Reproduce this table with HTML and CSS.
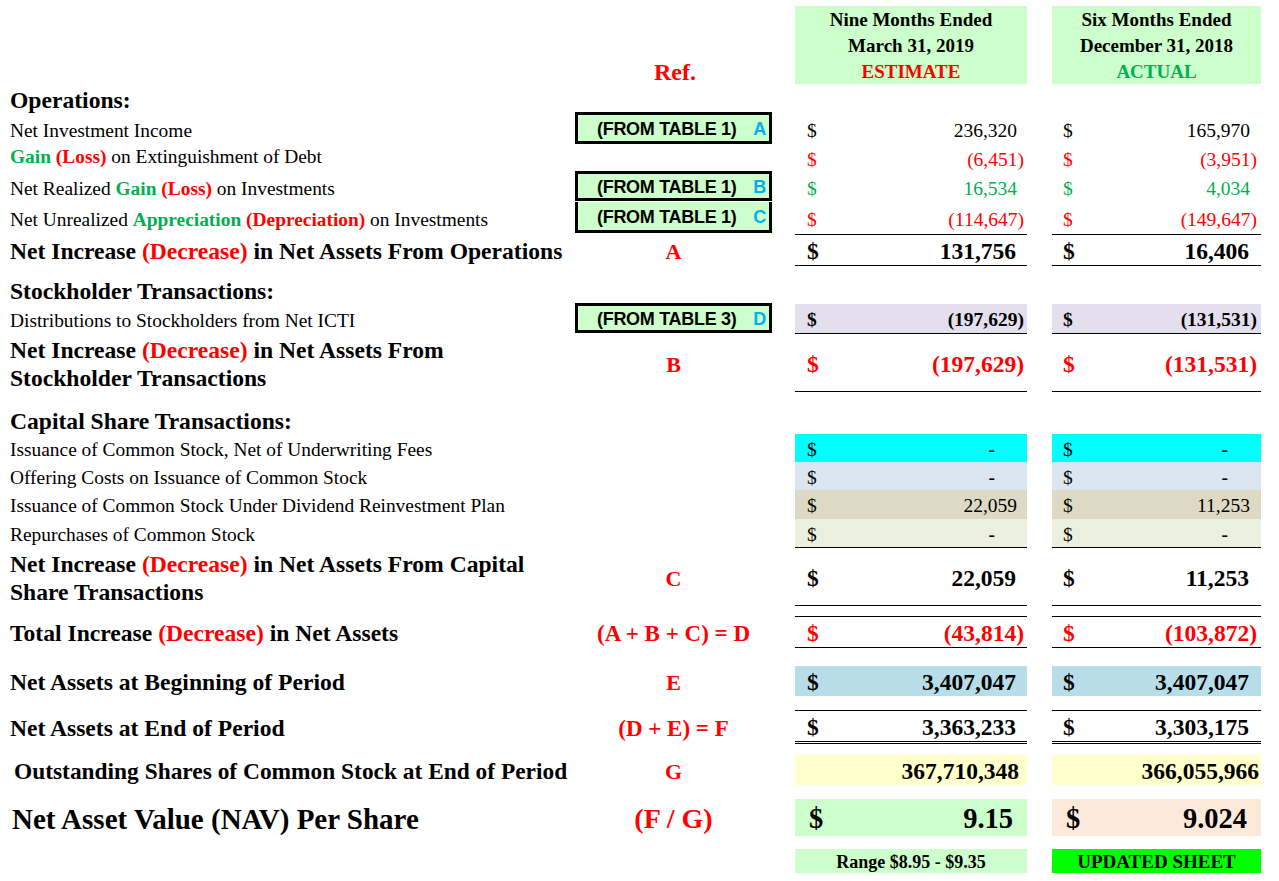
FILE: index.html
```html
<!DOCTYPE html>
<html>
<head>
<meta charset="utf-8">
<title>NAV Estimate</title>
<link rel="stylesheet" href="styles.css">
</head>
<body>
<div class="sheet">

  <div class="row r-head">
    <div class="ref ref-head">Ref.</div>
    <div class="hbox c1"><div>Nine Months Ended</div><div>March 31, 2019</div><div class="red">ESTIMATE</div></div>
    <div class="hbox c2"><div>Six Months Ended</div><div>December 31, 2018</div><div class="grn">ACTUAL</div></div>
  </div>

  <div class="row r-ops">
    <div class="lbl h"><span>Operations:</span></div>
  </div>

  <div class="row r-32">
    <div class="lbl"><span>Net Investment Income</span></div>
    <div class="ref ref-box"><div class="tbox"><span>(FROM TABLE 1)</span><span class="tl">A</span></div></div>
    <div class="v c1"><span>$</span><span class="num p">236,320</span></div>
    <div class="v c2"><span>$</span><span class="num p">165,970</span></div>
  </div>

  <div class="row r-27">
    <div class="lbl lbl-up"><span><b class="grn">Gain</b> <b class="red">(Loss)</b> on Extinguishment of Debt</span></div>
    <div class="v c1 red"><span>$</span><span class="num">(6,451)</span></div>
    <div class="v c2 red"><span>$</span><span class="num">(3,951)</span></div>
  </div>

  <div class="row r-30">
    <div class="lbl"><span>Net Realized <b class="grn">Gain</b> <b class="red">(Loss)</b> on Investments</span></div>
    <div class="ref ref-box"><div class="tbox"><span>(FROM TABLE 1)</span><span class="tl">B</span></div></div>
    <div class="v c1 grn"><span>$</span><span class="num p">16,534</span></div>
    <div class="v c2 grn"><span>$</span><span class="num p">4,034</span></div>
  </div>

  <div class="row r-32">
    <div class="lbl"><span>Net Unrealized <b class="grn">Appreciation</b> <b class="red">(Depreciation)</b> on Investments</span></div>
    <div class="ref ref-box"><div class="tbox tbox-join"><span>(FROM TABLE 1)</span><span class="tl">C</span></div></div>
    <div class="v c1 red"><span>$</span><span class="num">(114,647)</span></div>
    <div class="v c2 red"><span>$</span><span class="num">(149,647)</span></div>
  </div>

  <div class="row r-29">
    <div class="lbl h"><span>Net Increase <span class="red">(Decrease)</span> in Net Assets From Operations</span></div>
    <div class="ref">A</div>
    <div class="v c1 big bt bb"><span>$</span><span class="num pb">131,756</span></div>
    <div class="v c2 big bt bb"><span>$</span><span class="num pb">16,406</span></div>
  </div>

  <div class="spacer s-12"></div>

  <div class="row r-29">
    <div class="lbl h"><span>Stockholder Transactions:</span></div>
  </div>

  <div class="row r-30">
    <div class="lbl"><span>Distributions to Stockholders from Net ICTI</span></div>
    <div class="ref ref-box"><div class="tbox"><span>(FROM TABLE 3)</span><span class="tl">D</span></div></div>
    <div class="v c1 bold bg-purple bb"><span>$</span><span class="num">(197,629)</span></div>
    <div class="v c2 bold bg-purple bb"><span>$</span><span class="num">(131,531)</span></div>
  </div>

  <div class="row r-57">
    <div class="lbl h two"><span>Net Increase <span class="red">(Decrease)</span> in Net Assets From<br>Stockholder Transactions</span></div>
    <div class="ref">B</div>
    <div class="v c1 big red bb"><span>$</span><span class="num">(197,629)</span></div>
    <div class="v c2 big red bb"><span>$</span><span class="num">(131,531)</span></div>
  </div>

  <div class="row r-43">
    <div class="lbl h end"><span>Capital Share Transactions:</span></div>
  </div>

  <div class="row r-28">
    <div class="lbl"><span>Issuance of Common Stock, Net of Underwriting Fees</span></div>
    <div class="v c1 bg-cyan"><span>$</span><span class="num dash">-</span></div>
    <div class="v c2 bg-cyan"><span>$</span><span class="num dash">-</span></div>
  </div>

  <div class="row r-28">
    <div class="lbl"><span>Offering Costs on Issuance of Common Stock</span></div>
    <div class="v c1 bg-lblue"><span>$</span><span class="num dash">-</span></div>
    <div class="v c2 bg-lblue"><span>$</span><span class="num dash">-</span></div>
  </div>

  <div class="row r-29">
    <div class="lbl"><span>Issuance of Common Stock Under Dividend Reinvestment Plan</span></div>
    <div class="v c1 bg-tan"><span>$</span><span class="num p">22,059</span></div>
    <div class="v c2 bg-tan"><span>$</span><span class="num p">11,253</span></div>
  </div>

  <div class="row r-29">
    <div class="lbl"><span>Repurchases of Common Stock</span></div>
    <div class="v c1 bg-sage bb"><span>$</span><span class="num dash">-</span></div>
    <div class="v c2 bg-sage bb"><span>$</span><span class="num dash">-</span></div>
  </div>

  <div class="row r-54">
    <div class="lbl h two"><span>Net Increase <span class="red">(Decrease)</span> in Net Assets From Capital<br>Share Transactions</span></div>
    <div class="ref">C</div>
    <div class="v c1 big bb"><span>$</span><span class="num pb">22,059</span></div>
    <div class="v c2 big bb"><span>$</span><span class="num pb">11,253</span></div>
  </div>

  <div class="spacer s-14"></div>

  <div class="row r-30">
    <div class="lbl h"><span>Total Increase <span class="red">(Decrease)</span> in Net Assets</span></div>
    <div class="ref ref-formula">(A + B + C) = D</div>
    <div class="v c1 big red bt bb"><span>$</span><span class="num">(43,814)</span></div>
    <div class="v c2 big red bt bb"><span>$</span><span class="num">(103,872)</span></div>
  </div>

  <div class="spacer s-20"></div>

  <div class="row r-29">
    <div class="lbl h"><span>Net Assets at Beginning of Period</span></div>
    <div class="ref">E</div>
    <div class="v c1 big bg-blue"><span>$</span><span class="num pb">3,407,047</span></div>
    <div class="v c2 big bg-blue"><span>$</span><span class="num pb">3,407,047</span></div>
  </div>

  <div class="spacer s-15"></div>

  <div class="row r-33">
    <div class="lbl h"><span>Net Assets at End of Period</span></div>
    <div class="ref ref-formula">(D + E) = F</div>
    <div class="v c1 big bt bdbl"><span>$</span><span class="num pb">3,363,233</span></div>
    <div class="v c2 big bt bdbl"><span>$</span><span class="num pb">3,303,175</span></div>
  </div>

  <div class="spacer s-12"></div>

  <div class="row r-28">
    <div class="lbl h indent"><span>Outstanding Shares of Common Stock at End of Period</span></div>
    <div class="ref">G</div>
    <div class="v c1 big bg-yellow shares"><span class="num">367,710,348</span></div>
    <div class="v c2 big bg-yellow shares"><span class="num">366,055,966</span></div>
  </div>

  <div class="spacer s-16"></div>

  <div class="row r-37">
    <div class="lbl nav"><span>Net Asset Value (NAV) Per Share</span></div>
    <div class="ref ref-nav">(F / G)</div>
    <div class="v c1 huge bg-green navv"><span>$</span><span class="num">9.15</span></div>
    <div class="v c2 huge bg-peach navv"><span>$</span><span class="num">9.024</span></div>
  </div>

  <div class="spacer s-13"></div>

  <div class="row r-24">
    <div class="note c1 bg-green">Range $8.95 - $9.35</div>
    <div class="note c2 bg-lime">UPDATED SHEET</div>
  </div>

</div>
</body>
</html>
```

FILE: styles.css
```css
* { box-sizing: border-box; }

body {
  margin: 0;
  background: #ffffff;
  font-family: "Liberation Serif", "Times New Roman", serif;
  color: #000000;
}

.sheet {
  width: 1279px;
  padding-left: 10px;
}

.row {
  display: grid;
  grid-template-columns: 565px 197px 23px 232px 25px 209px;
}

.spacer { height: 12px; }
.s-12 { height: 12px; }
.s-13 { height: 13px; }
.s-14 { height: 14px; }
.s-15 { height: 15px; }
.s-16 { height: 16px; }
.s-20 { height: 20px; }

.r-head { height: 84px; }
.r-ops { height: 29px; }
.r-24 { height: 24px; }
.r-27 { height: 27px; }
.r-28 { height: 28px; }
.r-29 { height: 29px; }
.r-30 { height: 30px; }
.r-32 { height: 32px; }
.r-33 { height: 33px; }
.r-37 { height: 37px; }
.r-43 { height: 43px; }
.r-54 { height: 54px; }
.r-57 { height: 57px; }

.red { color: #ff0000; }
.grn { color: #00b050; }

/* label column */
.lbl {
  grid-column: 1;
  display: flex;
  align-items: center;
  padding-top: 3px;
  font-size: 19.4px;
  white-space: nowrap;
}
.lbl b { font-weight: bold; }
.lbl-up { padding-top: 0; padding-bottom: 3px; }
.lbl.h {
  font-size: 23.6px;
  font-weight: bold;
}
.lbl.two { line-height: 28px; padding-top: 2px; }
.lbl.end { align-items: flex-end; line-height: 26px; }
.lbl.indent { padding-left: 4px; font-size: 23.4px; }
.lbl.nav {
  font-size: 29px;
  font-weight: bold;
  padding-left: 2px;
}

/* reference column */
.ref {
  grid-column: 2;
  display: flex;
  align-items: center;
  justify-content: center;
  padding-top: 3px;
  color: #ff0000;
  font-weight: bold;
  font-size: 22px;
  white-space: nowrap;
}
.ref-head {
  align-items: flex-end;
  font-size: 24px;
  line-height: 24px;
  padding-left: 3px;
}
.ref-formula { font-size: 23px; }
.ref-nav { font-size: 28px; }
.ref-box { padding-top: 0; align-items: stretch; }

.tbox {
  width: 197px;
  margin-top: -1px;
  margin-bottom: 1px;
  border: 3px solid #000000;
  background: #ccffcc;
  display: flex;
  align-items: center;
  justify-content: space-between;
  padding: 2px 3px 0 19px;
  font-family: "Liberation Sans", Arial, sans-serif;
  font-weight: bold;
  font-size: 18px;
  letter-spacing: -0.3px;
  color: #000000;
}
.tbox-join { border-top: 0; margin-top: 0; }
.tl { color: #00b0f0; }

/* header boxes */
.hbox {
  margin-top: 6px;
  height: 78px;
  padding-top: 1px;
  background: #ccffcc;
  font-weight: bold;
  font-size: 19px;
  line-height: 26px;
  text-align: center;
}
.c1 { grid-column: 4; }
.c2 { grid-column: 6; }

/* value cells */
.v {
  display: flex;
  align-items: center;
  justify-content: space-between;
  padding-top: 3px;
  font-size: 19.5px;
  white-space: nowrap;
}
.v.c1 { padding-left: 12px; padding-right: 3px; }
.v.c2 { padding-left: 11px; padding-right: 4px; }
.num.p { padding-right: 7px; }
.num.pb { padding-right: 8px; }
.num.dash { padding-right: 29px; font-weight: bold; }
.v.bold { font-weight: bold; }
.v.big { font-size: 23.5px; font-weight: bold; }
.v.huge { font-size: 28.5px; font-weight: bold; }
.v.shares { justify-content: flex-end; }
.v.c1.shares { padding-right: 8px; }
.v.c2.shares { padding-right: 2px; }
.v.c1.navv { padding-left: 14px; padding-right: 14px; }
.v.c2.navv { padding-left: 14px; padding-right: 14px; }

.bt { border-top: 1px solid #000000; }
.bb { border-bottom: 1px solid #000000; }
.bdbl { border-bottom: 3px double #000000; }

.bg-purple { background: #e4dfec; }
.bg-cyan { background: #00ffff; }
.bg-lblue { background: #dce6f1; }
.bg-tan { background: #ddd9c4; }
.bg-sage { background: #ebf1de; }
.bg-blue { background: #b7dee8; }
.bg-yellow { background: #ffffcc; }
.bg-green { background: #ccffcc; }
.bg-peach { background: #fde9d9; }
.bg-lime { background: #00ff00; }

.note {
  display: flex;
  align-items: center;
  justify-content: center;
  padding-top: 2px;
  font-weight: bold;
  font-size: 18px;
}
.note.c2 { font-size: 19px; }
```
